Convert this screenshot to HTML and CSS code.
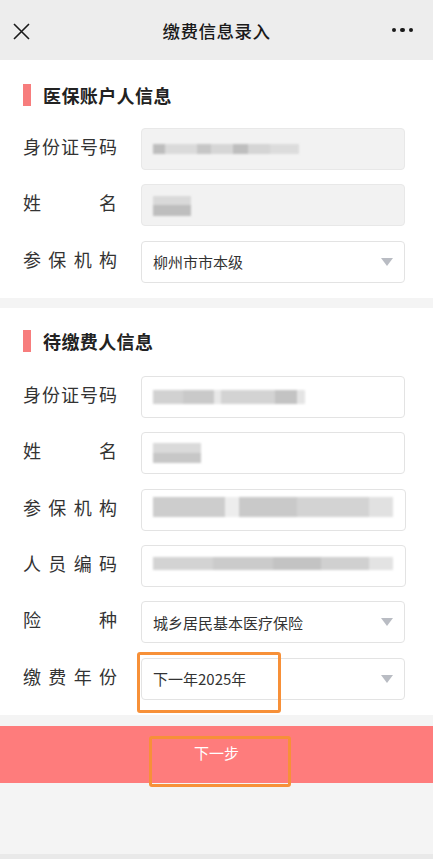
FILE: index.html
```html
<!DOCTYPE html>
<html lang="zh-CN">
<head>
<meta charset="utf-8">
<title>缴费信息录入</title>
<link rel="stylesheet" href="styles.css">
</head>
<body>
<div class="page">
  <header class="nav">
    <span class="nav-close">
      <svg width="17" height="17" viewBox="0 0 17 17"><path d="M1 1L16 16M16 1L1 16" stroke="#1a1a1a" stroke-width="1.6" fill="none"/></svg>
    </span>
    <h1 class="nav-title">缴费信息录入</h1>
    <span class="nav-more"><i></i><i></i><i></i></span>
  </header>

  <section class="card card-first">
    <h2 class="card-title">医保账户人信息</h2>
    <div class="rows">
      <div class="row">
        <label class="lbl">身份证号码</label>
        <div class="field disabled"><span class="mosaic m-id1"></span></div>
      </div>
      <div class="row">
        <label class="lbl">姓名</label>
        <div class="field disabled"><span class="mosaic m-name1"></span></div>
      </div>
      <div class="row">
        <label class="lbl">参保机构</label>
        <div class="field select"><span class="val">柳州市市本级</span><span class="caret"></span></div>
      </div>
    </div>
  </section>

  <div class="divider"></div>

  <section class="card card-second">
    <h2 class="card-title">待缴费人信息</h2>
    <div class="rows">
      <div class="row">
        <label class="lbl">身份证号码</label>
        <div class="field"><span class="mosaic m-id2"></span></div>
      </div>
      <div class="row">
        <label class="lbl">姓名</label>
        <div class="field"><span class="mosaic m-name2"></span></div>
      </div>
      <div class="row">
        <label class="lbl">参保机构</label>
        <div class="field"><span class="mosaic m-org"></span></div>
      </div>
      <div class="row">
        <label class="lbl">人员编码</label>
        <div class="field"><span class="mosaic m-code"></span></div>
      </div>
      <div class="row">
        <label class="lbl">险种</label>
        <div class="field select"><span class="val">城乡居民基本医疗保险</span><span class="caret"></span></div>
      </div>
      <div class="row">
        <label class="lbl">缴费年份</label>
        <div class="field select"><span class="val">下一年2025年</span><span class="caret"></span></div>
        <span class="mark mark-year"></span>
      </div>
    </div>
  </section>

  <div class="divider small"></div>

  <div class="submit">
    <button class="submit-btn">下一步</button>
    <span class="mark mark-btn"></span>
  </div>

  <div class="footer-space"></div>
  <div class="footer-line"></div>
</div>
</body>
</html>
```

FILE: styles.css
```css
* { box-sizing: border-box; }
html, body { margin: 0; padding: 0; }
body {
  font-family: "Noto Sans CJK SC", "Noto Sans", sans-serif;
  color: #333;
  background: #f4f4f4;
}
.page { width: 433px; height: 859px; display: flex; flex-direction: column; overflow: hidden; }

.nav {
  height: 60px;
  background: #ededed;
  display: grid;
  grid-template-columns: 80px 1fr 80px;
  align-items: center;
  flex: none;
}
.nav-close { padding-left: 13px; display: flex; align-items: center; padding-top: 2px; }
.nav-title {
  margin: 0;
  text-align: center;
  font-size: 17.5px;
  font-weight: 500;
  color: #1a1a1a;
  letter-spacing: 0.5px;
}
.nav-more { display: flex; justify-content: flex-end; gap: 4px; padding-right: 20px; }
.nav-more i { width: 4.5px; height: 4.5px; border-radius: 50%; background: #1a1a1a; display: block; }

.card { background: #fff; padding: 0 28px 0 23px; flex: none; }
.card-first { padding-top: 23px; padding-bottom: 15px; }
.card-second { padding-top: 22px; padding-bottom: 15px; }
.card-title {
  margin: 0;
  height: 23px;
  display: flex;
  align-items: center;
  font-size: 18px;
  font-weight: 700;
  color: #222;
  letter-spacing: 0.4px;
}
.card-title::before {
  content: "";
  width: 8px;
  height: 22px;
  background: #f77d7d;
  margin-right: 12px;
  flex: none;
}
.card-first .rows { margin-top: 22px; }
.card-second .rows { margin-top: 23px; }
.rows { display: flex; flex-direction: column; gap: 14.4px; }
.row { display: flex; align-items: center; gap: 24px; position: relative; }
.lbl {
  width: 94px;
  flex: none;
  font-size: 18px;
  color: #333;
  text-align: justify;
  text-align-last: justify;
  line-height: 24px;
  margin-top: -6px;
}
.field {
  flex: 1;
  height: 42px;
  border: 1px solid #e3e3e3;
  border-radius: 4px;
  background: #fff;
  display: flex;
  align-items: center;
  padding: 0 12px 0 11px;
  position: relative;
}
.field.disabled { background: #f2f2f2; border-color: #e8e8e8; }
.val { font-size: 15px; color: #333; flex: 1; }
.caret {
  width: 0; height: 0;
  border-left: 6.5px solid transparent;
  border-right: 6.5px solid transparent;
  border-top: 8px solid #b9bcc3;
  margin-right: -1px;
}

.mosaic {
  display: block;
  filter: blur(1.2px);
  opacity: 0.9;
}
.m-id1 {
  width: 146px; height: 10px; margin-top: -1px;
  background: linear-gradient(90deg, #b8b8b8 0 8%, #d8d8d8 8% 30%, #c2c2c2 30% 40%, #d4d4d4 40% 55%, #b9b9b9 55% 65%, #d2d2d2 65% 80%, #dadada 80% 100%);
}
.m-name1 {
  width: 38px; height: 20px; margin-top: 2px;
  background: linear-gradient(180deg, #d7d7d7 0 45%, #b9b9b9 45% 100%);
}
.m-id2 {
  width: 152px; height: 14px;
  background: linear-gradient(90deg, #cdcdcd 0 20%, #c4c4c4 20% 40%, #e6e6e6 40% 45%, #cfcfcf 45% 80%, #bdbdbd 80% 95%, #e2e2e2 95% 100%);
}
.m-name2 {
  width: 48px; height: 20px;
  background: linear-gradient(180deg, #d6d6d6 0 50%, #c1c1c1 50% 100%);
}
.m-org {
  width: 240px; height: 20px; margin-top: -6px;
  background: linear-gradient(90deg, #c8c8c8 0 30%, #ececec 30% 36%, #c4c4c4 36% 60%, #cfcfcf 60% 90%, #dedede 90% 100%);
}
.m-code {
  width: 240px; height: 13px; margin-top: -4px;
  background: linear-gradient(90deg, #cfcfcf 0 25%, #c6c6c6 25% 50%, #bdbdbd 50% 70%, #cbcbcb 70% 90%, #e0e0e0 90% 100%);
}

.divider { height: 10px; background: #f4f4f4; flex: none; }
.divider.small { height: 11px; }

.submit { position: relative; flex: none; }
.submit-btn {
  display: block;
  width: 100%;
  height: 57px;
  border: 0;
  background: #fe7c7c;
  color: #fff;
  font-family: inherit;
  font-size: 15px;
  padding: 0 0 4px;
}

.mark {
  position: absolute;
  border: 3px solid #f79038;
  border-radius: 3px;
  pointer-events: none;
}
.mark-year { left: 114px; top: -6px; width: 144px; height: 61px; }
.mark-btn { left: 149px; top: 10px; width: 142px; height: 51px; }

.footer-space { flex: 1; background: #f4f4f4; }
.footer-line { height: 5px; background: #e9e9e9; flex: none; }
```
